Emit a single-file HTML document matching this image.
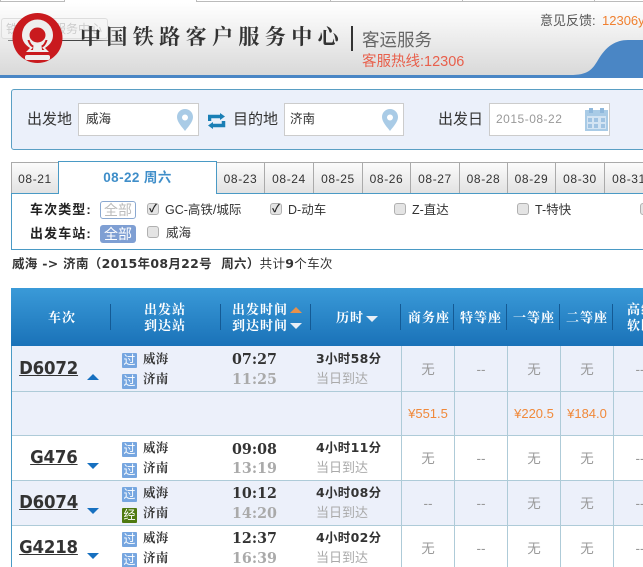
<!DOCTYPE html>
<html><head><meta charset="utf-8">
<style>
html,body{margin:0;padding:0;background:#fff}
#p{position:relative;width:643px;height:567px;overflow:hidden;font-family:"Liberation Sans","Noto Sans CJK SC",sans-serif;font-size:12px;color:#333;background:#fff}
#p div,#p span.t{position:absolute;white-space:nowrap}
.c{transform:translateX(-50%)}
.tab{top:162px;height:31px;line-height:32px;text-align:center;background:linear-gradient(#fbfbfb,#e2e2e2);border-left:1px solid #aaa;border-top:1px solid #aaa;box-sizing:border-box;font-size:12px;color:#333;letter-spacing:.6px}
.cb{width:12px;height:12px;background:#e4e4e4;border:1px solid #b0b0b0;border-radius:3px;box-sizing:border-box}
.ck{font-size:11px;line-height:10px;text-align:center;color:#222;font-weight:bold}
.lb{font-weight:bold;font-size:13px;line-height:16px;letter-spacing:1.1px;color:#222}
.ft{font-size:12.5px;line-height:16px;color:#333}
.sl{font-size:15px;line-height:20px;color:#333}
.row{left:12px;width:631px;box-sizing:border-box;border-bottom:1px solid #aecbd8}
.v{width:1px;background:#aecbd8;top:346px;height:221px}
.s{width:1px;height:26px;top:304px;background:#145a94}
.h{font-family:"Noto Serif CJK SC","Noto Sans CJK SC",serif;font-weight:bold;color:#fff;font-size:13px;line-height:16px;letter-spacing:1px;text-align:center}
.tr{font-family:"DejaVu Sans",sans-serif;font-weight:bold;font-size:18px;line-height:22px;color:#333;text-decoration:underline;right:565px;letter-spacing:-.2px;transform:scaleX(.92);transform-origin:right center}
.ic{left:122px;width:15px;height:15px;background:#76a6e0;color:#fff;font-size:12px;line-height:15px;text-align:center;border-radius:1px}
.st{left:143px;font-family:"Noto Serif CJK SC",serif;font-weight:bold;font-size:12.5px;line-height:16px;letter-spacing:.3px;color:#333}
.tm{left:232px;font-family:"DejaVu Serif",serif;font-weight:bold;font-size:15px;line-height:18px;color:#333;transform:scaleX(.95);transform-origin:left center}
.g{color:#aaa}
.du{left:316px;font-family:"DejaVu Sans","Noto Sans CJK SC",sans-serif;font-weight:bold;font-size:12.5px;line-height:16px;letter-spacing:.3px;color:#333}
.ar{left:316px;font-size:13px;line-height:16px;color:#aaa}
.se{font-size:13.5px;line-height:16px;color:#999;transform:translateX(-50%)}
.pr{font-size:13px;line-height:16px;color:#f0893a;transform:translateX(-50%)}
.dn{left:87px;width:0;height:0;border-left:6px solid transparent;border-right:6px solid transparent;border-top:6px solid #1670c0}
</style></head><body><div id="p">

<div style="left:0;top:0;width:65px;height:2px;border:1px solid #bbb;border-top:0;box-sizing:border-box"></div>
<div style="left:196px;top:0;width:135px;height:2px;border:1px solid #bbb;border-top:0;box-sizing:border-box"></div>
<div style="left:330px;top:0;width:133px;height:2px;border:1px solid #bbb;border-top:0;box-sizing:border-box"></div>
<div style="left:462px;top:0;width:133px;height:2px;border:1px solid #bbb;border-top:0;box-sizing:border-box"></div>
<div style="left:594px;top:0;width:49px;height:2px;border-left:1px solid #bbb;border-bottom:1px solid #bbb;box-sizing:border-box"></div>

<div style="left:0;top:3px;width:643px;height:72px;background:linear-gradient(#fff 0,#f4f4f4 30%,#d9d9d9 100%)"></div>
<svg style="position:absolute;left:570px;top:38px" width="73" height="37" viewBox="0 0 73 37"><path d="M0 37C18 37 22 32 28 22C36 8 46 2 58 2L73 2L73 37Z" fill="#4a86c5"/></svg>
<div style="left:0;top:75px;width:643px;height:3px;background:#4a86c5"></div>

<div style="left:8px;top:40px;width:100px;height:1px;background:linear-gradient(90deg,#888,#444 40%,#444 80%,#999)"></div>
<div style="left:1px;top:18px;width:107px;height:21px;border:1px solid #ddd;border-radius:3px;box-sizing:border-box;background:rgba(245,245,245,.6);color:#ccc;font-size:12px;line-height:20px;padding-left:4px">铁路客户服务中心</div>
<svg style="position:absolute;left:12px;top:12px" width="52" height="52" viewBox="0 0 52 52">
<circle cx="25.500" cy="26" r="25" fill="#c91a1e"/>
<path d="M14 40L18 36C12 32 10 28 10 23A15.500 15.500 0 0 1 41 23C41 28 39 32 33 36L37 40Z" fill="#eee"/>
<ellipse cx="25.500" cy="23" rx="8" ry="7.500" fill="#c91a1e"/>
<path d="M17.500 28C18.500 31 20 33 21.500 33.500L21 38H18.500L21 35.500C19 35 16.500 32 15.500 28Z" fill="#c91a1e"/>
<path d="M33.500 28C32.500 31 31 33 29.500 33.500L30 38H32.500L30 35.500C32 35 34.500 32 35.500 28Z" fill="#c91a1e"/>
<rect x="13" y="43" width="25" height="5" rx="2" fill="#eee"/>
</svg>

<div style="left:80px;top:24px;font-size:21px;line-height:24px;letter-spacing:5.400px;color:#333;font-family:'Noto Serif CJK SC',serif;font-weight:bold">中国铁路客户服务中心</div>
<div style="left:351px;top:26px;width:2px;height:25px;background:#333"></div>
<div style="left:362px;top:28px;font-size:17.500px;line-height:24px;color:#666">客运服务</div>
<div style="left:362px;top:53px;font-size:14.500px;line-height:18px;color:#e8604c">客服热线:12306</div>
<div style="left:540px;top:13px;font-size:13px;line-height:16px;color:#555">意见反馈:</div>
<div style="left:602px;top:13px;font-size:13px;line-height:16px;color:#f08030">12306yw@rails.cn</div>

<div style="left:11px;top:89px;width:660px;height:61px;box-sizing:border-box;background:#ebf0fa;border:1px solid #5a9fc4;border-radius:3px"></div>
<div class="sl" style="left:27px;top:110px">出发地</div>
<div style="left:78px;top:103px;width:121px;height:33px;box-sizing:border-box;background:#fff;border:1px solid #ccc"></div>
<div style="left:86px;top:111px;font-size:12.500px;line-height:16px">威海</div>
<svg style="position:absolute;left:176px;top:108px" width="18" height="23" viewBox="0 0 18 23"><path fill-rule="evenodd" d="M9 1C4.500 1 1 4.500 1 9C1 14 6 19 9 23C12 19 17 14 17 9C17 4.500 13.500 1 9 1ZM9 6.500A3 3 0 1 1 9 12.500A3 3 0 1 1 9 6.500Z" fill="#a9cbe6"/></svg>
<svg style="position:absolute;left:208px;top:113px" width="18" height="16" viewBox="0 0 18 16"><path d="M1.500 8V3.500H13" fill="none" stroke="#1a7fb5" stroke-width="3.500"/><path d="M12 0L17 3.500L12 7Z" fill="#1a7fb5"/><path d="M15.500 8V12.500H4" fill="none" stroke="#1a7fb5" stroke-width="3.500"/><path d="M5 9L0 12.500L5 16Z" fill="#1a7fb5"/></svg>
<div class="sl" style="left:233px;top:110px">目的地</div>
<div style="left:284px;top:103px;width:120px;height:33px;box-sizing:border-box;background:#fff;border:1px solid #ccc"></div>
<div style="left:290px;top:111px;font-size:12.500px;line-height:16px">济南</div>
<svg style="position:absolute;left:381px;top:108px" width="18" height="23" viewBox="0 0 18 23"><path fill-rule="evenodd" d="M9 1C4.500 1 1 4.500 1 9C1 14 6 19 9 23C12 19 17 14 17 9C17 4.500 13.500 1 9 1ZM9 6.500A3 3 0 1 1 9 12.500A3 3 0 1 1 9 6.500Z" fill="#a9cbe6"/></svg>
<div class="sl" style="left:438px;top:110px">出发日</div>
<div style="left:489px;top:103px;width:121px;height:33px;box-sizing:border-box;background:#fff;border:1px solid #ccc"></div>
<div style="left:496px;top:111px;font-size:12px;line-height:16px;color:#999;letter-spacing:.5px">2015-08-22</div>
<svg style="position:absolute;left:585px;top:107px" width="23" height="24" viewBox="0 0 23 24"><rect x="0" y="3" width="23" height="21" fill="#a9cbe6"/><rect x="4" y="1" width="4" height="5" fill="#8fb8dc"/><rect x="15" y="1" width="4" height="5" fill="#8fb8dc"/><rect x="2" y="9" width="19" height="13" fill="#d3e4f3"/><g fill="#a0c3e2"><rect x="3" y="11" width="4" height="4"/><rect x="9" y="11" width="4" height="4"/><rect x="16" y="11" width="4" height="4"/><rect x="3" y="17" width="4" height="4"/><rect x="9" y="17" width="4" height="4"/><rect x="16" y="17" width="4" height="4"/></g></svg>

<div class="tab" style="left:11px;width:47px">08-21</div>
<div class="tab" style="left:216px;width:48px">08-23</div>
<div class="tab" style="left:264px;width:49px">08-24</div>
<div class="tab" style="left:313px;width:49px">08-25</div>
<div class="tab" style="left:362px;width:48px">08-26</div>
<div class="tab" style="left:410px;width:49px">08-27</div>
<div class="tab" style="left:459px;width:48px">08-28</div>
<div class="tab" style="left:507px;width:48px">08-29</div>
<div class="tab" style="left:555px;width:49px">08-30</div>
<div class="tab" style="left:604px;width:49px">08-31</div>
<div style="left:11px;top:193px;width:660px;height:57px;box-sizing:border-box;border:1px solid #4a9ac5;background:#fff"></div>
<div style="left:58px;top:161px;width:159px;height:33px;box-sizing:border-box;background:#fff;border:1px solid #4a9ac5;border-bottom:0;text-align:center;line-height:32px;color:#3f8ec9;font-weight:bold;font-size:13.500px;letter-spacing:.4px">08-22 周六</div>

<div class="lb" style="left:30px;top:202px">车次类型:</div>
<div style="left:100px;top:201px;width:36px;height:18px;box-sizing:border-box;border:1px solid #8aa8d0;border-radius:3px;color:#bbb;font-size:14px;line-height:16px;text-align:center">全部</div>
<div class="cb ck" style="left:147px;top:203px">✓</div><div class="ft" style="left:165px;top:202px">GC-高铁/城际</div>
<div class="cb ck" style="left:270px;top:203px">✓</div><div class="ft" style="left:288px;top:202px">D-动车</div>
<div class="cb" style="left:394px;top:203px"></div><div class="ft" style="left:412px;top:202px">Z-直达</div>
<div class="cb" style="left:517px;top:203px"></div><div class="ft" style="left:535px;top:202px">T-特快</div>
<div class="cb" style="left:640px;top:203px"></div>
<div class="lb" style="left:30px;top:226px">出发车站:</div>
<div style="left:100px;top:225px;width:36px;height:18px;background:#7f9fd3;border-radius:3px;color:#fff;font-size:14px;line-height:18px;text-align:center">全部</div>
<div class="cb" style="left:147px;top:226px"></div><div class="ft" style="left:166px;top:225px">威海</div>

<div style="left:12px;top:256px;font-family:'DejaVu Sans','Noto Sans CJK SC',sans-serif;font-size:12.500px;line-height:16px;letter-spacing:.3px;color:#333"><b>威海 -&gt; 济南（2015年08月22号&nbsp;&nbsp;周六）</b>共计<b>9</b>个车次</div>

<div style="left:11px;top:288px;width:632px;height:58px;background:linear-gradient(#3a9ad8,#1a72b8)"></div>
<div class="h c" style="left:62px;top:309px">车次</div>
<div class="h c" style="left:165px;top:301px">出发站<br>到达站</div>
<div class="h" style="left:232px;top:301px">出发时间<br>到达时间</div>
<div style="left:290px;top:307px;width:0;height:0;border-left:6px solid transparent;border-right:6px solid transparent;border-bottom:6px solid #e8914a"></div>
<div style="left:290px;top:323px;width:0;height:0;border-left:6px solid transparent;border-right:6px solid transparent;border-top:6px solid #e8eef6"></div>
<div class="h" style="left:336px;top:309px">历时</div>
<div style="left:366px;top:316px;width:0;height:0;border-left:6px solid transparent;border-right:6px solid transparent;border-top:6px solid #e8eef6"></div>
<div class="h c" style="left:429px;top:309px">商务座</div>
<div class="h c" style="left:481px;top:309px">特等座</div>
<div class="h c" style="left:534px;top:309px">一等座</div>
<div class="h c" style="left:587px;top:309px">二等座</div>
<div class="h" style="left:627px;top:301px;text-align:left">高级<br>软卧</div>
<div class="s" style="left:110px"></div><div class="s" style="left:220px"></div><div class="s" style="left:310px"></div><div class="s" style="left:400px"></div><div class="s" style="left:453px"></div><div class="s" style="left:506px"></div><div class="s" style="left:559px"></div><div class="s" style="left:612px"></div>

<div class="row" style="top:346px;height:46px;background:#ecf0fa"></div>
<div class="row" style="top:392px;height:44px;background:#ecf0fa"></div>
<div class="row" style="top:436px;height:45px;background:#fff"></div>
<div class="row" style="top:481px;height:45px;background:#ecf0fa"></div>
<div class="row" style="top:526px;height:41px;background:#fff;border-bottom:0"></div>
<div style="left:11px;top:346px;width:1px;height:221px;background:#4a9ac5"></div>
<div class="v" style="left:401px"></div><div class="v" style="left:454px"></div><div class="v" style="left:507px"></div><div class="v" style="left:560px"></div><div class="v" style="left:613px"></div>

<div class="tr" style="top:358px">D6072</div>
<div style="left:87px;top:374px;width:0;height:0;border-left:6px solid transparent;border-right:6px solid transparent;border-bottom:6px solid #1670c0"></div>
<div class="ic" style="top:353px">过</div><div class="st" style="top:350px">威海</div>
<div class="ic" style="top:374px">过</div><div class="st" style="top:370px">济南</div>
<div class="tm" style="top:350px">07:27</div><div class="tm g" style="top:370px">11:25</div>
<div class="du" style="top:351px">3小时58分</div><div class="ar" style="top:371px">当日到达</div>
<div class="se" style="left:428px;top:362px">无</div><div class="se" style="left:481px;top:362px">--</div><div class="se" style="left:534px;top:362px">无</div><div class="se" style="left:587px;top:362px">无</div><div class="se" style="left:640px;top:362px">--</div>
<div class="pr" style="left:428px;top:406px">¥551.5</div><div class="pr" style="left:534px;top:406px">¥220.5</div><div class="pr" style="left:587px;top:406px">¥184.0</div>

<div class="tr" style="top:447px">G476</div>
<div class="dn" style="top:463px"></div>
<div class="ic" style="top:442px">过</div><div class="st" style="top:439px">威海</div>
<div class="ic" style="top:463px">过</div><div class="st" style="top:459px">济南</div>
<div class="tm" style="top:440px">09:08</div><div class="tm g" style="top:459px">13:19</div>
<div class="du" style="top:440px">4小时11分</div><div class="ar" style="top:460px">当日到达</div>
<div class="se" style="left:428px;top:451px">无</div><div class="se" style="left:481px;top:451px">--</div><div class="se" style="left:534px;top:451px">无</div><div class="se" style="left:587px;top:451px">无</div><div class="se" style="left:640px;top:451px">--</div>

<div class="tr" style="top:492px">D6074</div>
<div class="dn" style="top:508px"></div>
<div class="ic" style="top:487px">过</div><div class="st" style="top:484px">威海</div>
<div class="ic" style="top:508px;background:#4f7a10">经</div><div class="st" style="top:504px">济南</div>
<div class="tm" style="top:484px">10:12</div><div class="tm g" style="top:504px">14:20</div>
<div class="du" style="top:485px">4小时08分</div><div class="ar" style="top:505px">当日到达</div>
<div class="se" style="left:428px;top:496px">--</div><div class="se" style="left:481px;top:496px">--</div><div class="se" style="left:534px;top:496px">无</div><div class="se" style="left:587px;top:496px">无</div><div class="se" style="left:640px;top:496px">--</div>

<div class="tr" style="top:537px">G4218</div>
<div class="dn" style="top:553px"></div>
<div class="ic" style="top:532px">过</div><div class="st" style="top:529px">威海</div>
<div class="ic" style="top:553px">过</div><div class="st" style="top:549px">济南</div>
<div class="tm" style="top:529px">12:37</div><div class="tm g" style="top:549px">16:39</div>
<div class="du" style="top:530px">4小时02分</div><div class="ar" style="top:550px">当日到达</div>
<div class="se" style="left:428px;top:541px">无</div><div class="se" style="left:481px;top:541px">--</div><div class="se" style="left:534px;top:541px">无</div><div class="se" style="left:587px;top:541px">无</div><div class="se" style="left:640px;top:541px">--</div>

</div></body></html>
